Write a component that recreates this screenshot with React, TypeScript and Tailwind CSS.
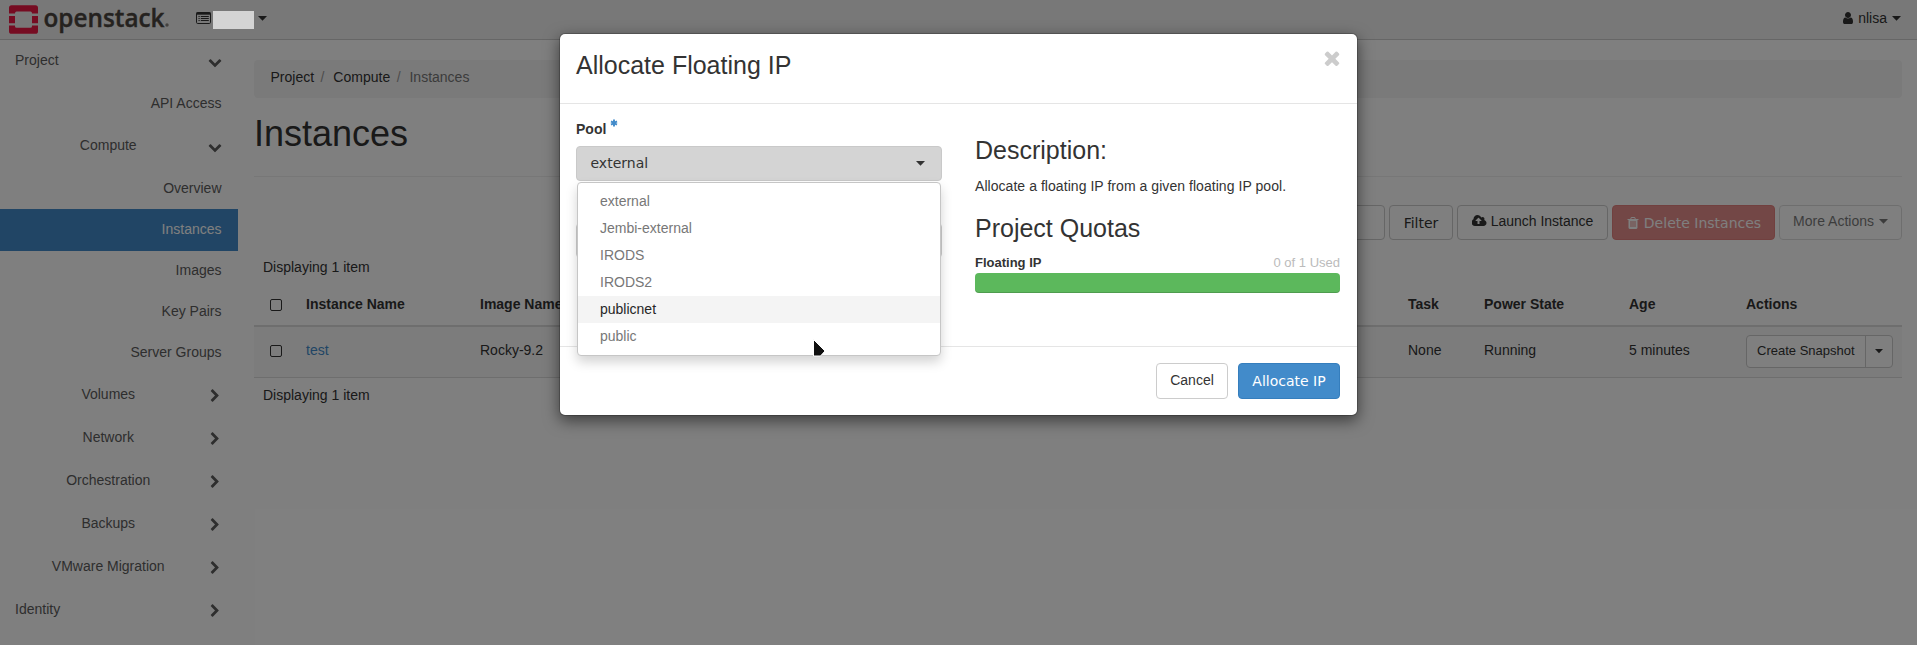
import type { ReactNode } from "react";

const paths = {
  down: "M1683 808l-742 741q-19 19-45 19t-45-19l-742-741q-19-19-19-45.5t19-45.5l166-165q19-19 45-19t45 19l531 531 531-531q19-19 45-19t45 19l166 165q19 19 19 45.5t-19 45.5z",
  right:
    "M1363 877l-742 742q-19 19-45 19t-45-19l-166-166q-19-19-19-45t19-45l531-531-531-531q-19-19-19-45t19-45l166-166q19-19 45-19t45 19l742 742q19 19 19 45t-19 45z",
  times:
    "M1490 1322q0 40-28 68l-136 136q-28 28-68 28t-68-28l-294-294-294 294q-28 28-68 28t-68-28l-136-136q-28-28-28-68t28-68l294-294-294-294q-28-28-28-68t28-68l136-136q28-28 68-28t68 28l294 294 294-294q28-28 68-28t68 28l136 136q28 28 28 68t-28 68l-294 294 294 294q28 28 28 68z",
  user: "M1536 1399q0 109-62.5 187t-150.5 78h-854q-88 0-150.5-78t-62.5-187q0-85 8.5-160.5t31.5-152 58.5-131 94-89 134.5-34.5q131 128 313 128t313-128q76 0 134.5 34.5t94 89 58.5 131 31.5 152 8.5 160.5zm-256-887q0 159-112.5 271.5t-271.5 112.5-271.5-112.5-112.5-271.5 112.5-271.5 271.5-112.5 271.5 112.5 112.5 271.5z",
  trash:
    "M704 1376v-704q0-14-9-23t-23-9h-64q-14 0-23 9t-9 23v704q0 14 9 23t23 9h64q14 0 23-9t9-23zm256 0v-704q0-14-9-23t-23-9h-64q-14 0-23 9t-9 23v704q0 14 9 23t23 9h64q14 0 23-9t9-23zm256 0v-704q0-14-9-23t-23-9h-64q-14 0-23 9t-9 23v704q0 14 9 23t23 9h64q14 0 23-9t9-23zm-544-992h448l-48-117q-7-9-17-11h-317q-10 2-17 11zm928 32v64q0 14-9 23t-23 9h-96v948q0 83-47 143.5t-113 60.5h-832q-66 0-113-58.5t-47-141.5v-952h-96q-14 0-23-9t-9-23v-64q0-14 9-23t23-9h309l70-167q15-37 54-63t79-26h320q40 0 79 26t54 63l70 167h309q14 0 23 9t9 23z",
  cloud:
    "M1216 864q0-14-9-23l-352-352q-9-9-23-9t-23 9l-351 351q-10 12-10 24 0 14 9 23t23 9h224v352q0 13 9.5 22.5t22.5 9.5h192q13 0 22.5-9.5t9.5-22.5v-352h224q13 0 22.5-9.5t9.5-22.5zm640 288q0 159-112.5 271.5t-271.5 112.5h-1088q-185 0-316.5-131.5t-131.5-316.5q0-130 70-240t188-165q-2-30-2-43 0-212 150-362t362-150q156 0 285.5 87t188.5 231q71-62 166-62 106 0 181 75t75 181q0 76-41 138 130 31 213.5 135.5t83.5 238.5z",
};

function Icon({ name, className, box = "0 0 1792 1792" }: { name: keyof typeof paths; className: string; box?: string }) {
  return (
    <svg viewBox={box} className={`shrink-0 ${className}`} fill="currentColor">
      <path d={paths[name]} />
    </svg>
  );
}

function Caret({ className = "", size = "h-[5px] w-[9px]" }: { className?: string; size?: string }) {
  return (
    <svg viewBox="0 0 9 5" className={`shrink-0 ${size} ${className}`} fill="currentColor">
      <path d="M0 0h9L4.500 4.800z" />
    </svg>
  );
}

function ListIcon() {
  return (
    <svg viewBox="0 0 15 12" className="mt-[11.500px] h-3 w-[15px]" fill="none" stroke="#333">
      <rect x=".5" y=".5" width="14" height="11" rx="1.2" />
      <path d="M.5 1.500h14" strokeWidth="2.400" />
      <path d="M2.500 4.500h1.200M2.500 6.500h1.200M2.500 8.500h1.200M4.800 4.500h8M4.800 6.500h8M4.800 8.500h8" />
    </svg>
  );
}

function Logo() {
  return (
    <svg viewBox="0 0 160 40" className="ml-2 h-10 w-40 shrink-0 overflow-visible">
      <g fill="#ed1944">
        <path d="M1 13.6V7.8A2.6 2.6 0 0 1 3.6 5.2h23.8A2.6 2.6 0 0 1 30 7.8v5.8h-6v-.4a1.6 1.6 0 0 0-1.6-1.6H8.6A1.6 1.6 0 0 0 7 13.2v.4z" />
        <path d="M1 15.9h6v7.4H1zM24 15.9h6v7.4h-6z" />
        <path d="M1 25.6h6v.6a1.6 1.6 0 0 0 1.6 1.6h13.800a1.600 1.600 0 0 0 1.600-1.600v-.6h6v5.600a2.600 2.600 0 0 1-2.600 2.600H3.600A2.600 2.600 0 0 1 1 31.200z" />
      </g>
      <text
        x="35.5"
        y="26.700"
        fontFamily="'Open Sans'"
        fontWeight="600"
        fontSize="25.500"
        textLength="121"
        lengthAdjust="spacingAndGlyphs"
        fill="#4a443f"
        stroke="#4a443f"
        strokeWidth=".4"
      >
        openstack
      </text>
      <circle cx="159" cy="25" r="1.700" fill="#8a8580" />
    </svg>
  );
}

type Row = { label: string; kind: "root" | "group" | "leaf"; size: string; open?: boolean; active?: boolean };

const rows: Row[] = [
  { label: "Project", kind: "root", size: "h-[43px] pt-2.5", open: true },
  { label: "API Access", kind: "leaf", size: "h-[42px] pt-2.5" },
  { label: "Compute", kind: "group", size: "h-[43px] pt-2.5", open: true },
  { label: "Overview", kind: "leaf", size: "h-[41px] pt-2.5" },
  { label: "Instances", kind: "leaf", size: "h-[42px] pt-2.5", active: true },
  { label: "Images", kind: "leaf", size: "h-[41px] pt-[9px]" },
  { label: "Key Pairs", kind: "leaf", size: "h-[41px] pt-[9px]" },
  { label: "Server Groups", kind: "leaf", size: "h-[41px] pt-[9px]" },
  { label: "Volumes", kind: "group", size: "h-[43px] pt-2.5" },
  { label: "Network", kind: "group", size: "h-[43px] pt-2.5" },
  { label: "Orchestration", kind: "group", size: "h-[43px] pt-2.5" },
  { label: "Backups", kind: "group", size: "h-[43px] pt-2.5" },
  { label: "VMware Migration", kind: "group", size: "h-[43px] pt-2.5" },
  { label: "Identity", kind: "root", size: "h-[43px] pt-2.5" },
];

const align = { root: "text-left", group: "text-center", leaf: "text-right" };

function Sidebar() {
  return (
    <nav className="w-[238px] shrink-0">
      {rows.map((r) => (
        <div
          key={r.label}
          className={`flex pr-[16.500px] pl-[15px] ${r.size} ${r.active ? "bg-[#428bca] text-white" : "text-[#5c5c5c]"}`}
        >
          <span className={`flex-1 ${align[r.kind]}`}>{r.label}</span>
          {r.kind !== "leaf" && (
            <span className="flex w-5 justify-end pt-[5px]">
              <Icon name={r.open ? "down" : "right"} className="size-3.5" />
            </span>
          )}
        </div>
      ))}
    </nav>
  );
}

function Button({ children, className }: { children: ReactNode; className: string }) {
  return (
    <button className={`flex h-[35px] shrink-0 justify-center rounded border leading-5 ${className}`}>{children}</button>
  );
}

function Checkbox() {
  return <span className="block size-[11.5px] rounded-[2px] border border-[#333]" />;
}

const columns = "grid grid-cols-[44px_174px_928px_76px_145px_117px_164px]";

function Main() {
  return (
    <main className="flex flex-1 flex-col pt-5 pr-[15px] pl-4 text-[#333]">
      <div className="flex h-[38px] rounded bg-[#f5f5f5] pt-[7px] pl-[16.500px]">
        <span>Project</span>
        <span className="pr-[5px] pl-[6.500px] text-[#999]">/&nbsp;</span>
        <span>Compute</span>
        <span className="pr-[5px] pl-[6.500px] text-[#999]">/&nbsp;</span>
        <span className="text-[#777]">Instances</span>
      </div>
      <h1 className="h-[79px] border-b border-[#eee] pt-4 text-[36px] leading-10">Instances</h1>
      <div className="mt-7 flex justify-end gap-1">
        <div className="h-[35px] w-[220px] rounded border border-[#ccc]" />
        <Button className="w-16 border-[#ccc] pt-[7px] font-['DejaVu_Sans']">Filter</Button>
        <Button className="w-[151px] gap-1 border-[#ccc] pt-[5px]">
          <Icon name="cloud" box="0 0 1920 1792" className="mt-[3px] h-3.5 w-[15px]" />
          Launch Instance
        </Button>
        <Button className="w-[163px] gap-1 border-[#d43f3a] bg-[#d9534f] pt-[7px] font-['DejaVu_Sans'] text-white opacity-65">
          <Icon name="trash" className="mt-[3px] size-3.5" />
          Delete Instances
        </Button>
        <Button className="w-[123px] gap-[5px] border-[#ccc] pt-[5px] opacity-65">
          More Actions
          <Caret className="mt-2" />
        </Button>
      </div>
      <div className="mt-[17px] pl-[9px]">Displaying 1 item</div>
      <div className={`${columns} mt-[17px] h-[33px] border-b-2 border-[#ddd] font-bold`}>
        <span className="pt-[5px] pl-4">
          <Checkbox />
        </span>
        <span className="pl-2">Instance Name</span>
        <span className="pl-2">Image Name</span>
        <span className="pl-2">Task</span>
        <span className="pl-2">Power State</span>
        <span className="pl-2">Age</span>
        <span className="pl-2">Actions</span>
      </div>
      <div className={`${columns} h-[51px] border-b border-[#ddd] bg-[#f9f9f9] pt-[13px]`}>
        <span className="pt-[5px] pl-4">
          <Checkbox />
        </span>
        <span className="pl-2 text-[#428bca]">test</span>
        <span className="pl-2">Rocky-9.2</span>
        <span className="pl-2">None</span>
        <span className="pl-2">Running</span>
        <span className="pl-2">5 minutes</span>
        <span className="-mt-[5px] ml-2 flex h-[33px] w-[147px] rounded border border-[#ccc] bg-white text-[13px]">
          <span className="flex-1 pt-[5px] pl-2.5 whitespace-nowrap">Create Snapshot</span>
          <span className="flex w-[27px] items-center justify-center border-l border-[#ccc]">
            <Caret size="h-[4.500px] w-2" />
          </span>
        </span>
      </div>
      <div className="mt-[7px] pl-[9px]">Displaying 1 item</div>
    </main>
  );
}

const pools = ["external", "Jembi-external", "IRODS", "IRODS2", "publicnet", "public"];

function PoolMenu() {
  return (
    <ul className="absolute top-[35px] left-0 z-10 w-[364px] rounded border border-[#c6c6c6] bg-white py-[5px] font-['Liberation_Sans'] shadow-[0_6px_12px_rgba(0,0,0,0.175)]">
      {pools.map((p) => (
        <li
          key={p}
          className={`h-[27px] pt-[3px] pl-[22px] ${p === "publicnet" ? "bg-[#f4f4f4] text-[#262626]" : "text-[#777]"}`}
        >
          {p}
        </li>
      ))}
    </ul>
  );
}

function Modal() {
  return (
    <div className="absolute top-[33px] left-[559px] z-30 flex h-[383px] w-[799px] flex-col rounded-md border border-black/20 bg-white bg-clip-padding text-[#333] shadow-[0_5px_15px_rgba(0,0,0,0.5)]">
      <header className="flex h-[70px] shrink-0 justify-between border-b border-[#e5e5e5] pt-4 pr-[14px] pl-4">
        <h3 className="text-[25px] leading-[30px]">Allocate Floating IP</h3>
        <Icon name="times" className="-mt-[3px] size-[22px] text-[#ccc]" />
      </header>
      <div className="flex h-[242px] shrink-0 gap-[33px] pl-4">
        <div className="w-[366px] pt-[15px]">
          <label className="flex gap-[4px] font-bold">
            Pool
            <svg viewBox="0 0 8 8" className="size-2" stroke="#428bca" strokeWidth="1.9">
              <path d="M4 .6v6.8M1 2.3l6 3.4M7 2.3L1 5.7" />
            </svg>
          </label>
          <div className="relative mt-[7px] flex h-[35px] justify-between rounded border border-[#c9c9c9] bg-[#d4d4d4] pt-[6px] pr-4 pl-[13.500px] font-['DejaVu_Sans']">
            external
            <Caret className="mt-2" />
            <PoolMenu />
          </div>
          <div className="mt-[42px] h-[35px] rounded border border-[#ccc]" />
        </div>
        <div className="w-[365px] pt-[31px]">
          <h3 className="text-[25px] leading-[30px]">Description:</h3>
          <p className="mt-[11px] tracking-[0.050px]">Allocate a floating IP from a given floating IP pool.</p>
          <h3 className="mt-[17px] text-[25px] leading-[30px]">Project Quotas</h3>
          <div className="mt-2.5 flex justify-between text-[13px] leading-5">
            <strong>Floating IP</strong>
            <span className="text-[#bbb]">0 of 1 Used</span>
          </div>
          <div className="h-5 rounded bg-[#5cb85c] shadow-[inset_0_-1px_0_rgba(0,0,0,0.15)]" />
        </div>
      </div>
      <footer className="flex flex-1 justify-end gap-2.5 border-t border-[#e5e5e5] pt-4 pr-[17px]">
        <button className="h-9 w-[72px] rounded border border-[#ccc] pb-[2px]">Cancel</button>
        <button className="h-9 w-[102px] rounded border border-[#357ebd] bg-[#428bca] font-['DejaVu_Sans'] whitespace-nowrap text-white">
          Allocate IP
        </button>
      </footer>
    </div>
  );
}

export default function App() {
  return (
    <div className="relative flex h-[645px] flex-col overflow-hidden bg-white font-['Liberation_Sans',Arial,sans-serif] text-sm leading-5">
      <header className="flex h-10 shrink-0 border-b border-[#ccc] bg-[#f0f0f0] text-[#333]">
        <Logo />
        <div className="ml-7 flex">
          <ListIcon />
          <span className="relative z-20 mt-[11px] ml-[2px] h-[18px] w-[41px] bg-[#d4d4d4]" />
          <Caret className="mt-4 ml-1" />
        </div>
        <div className="ml-auto flex pt-2 pr-4">
          <Icon name="user" className="mt-[3px] size-3.5" />
          <span className="ml-[3px]">nlisa</span>
          <Caret className="mt-2 ml-[5px]" />
        </div>
      </header>
      <div className="flex flex-1">
        <Sidebar />
        <Main />
      </div>
      <div className="absolute inset-0 z-10 bg-black/50" />
      <Modal />
      <svg viewBox="0 0 14 20" className="absolute top-[338px] left-[812px] z-40 h-5 w-3.5">
        <path d="M1.500 1.500L13 13l-4.500 5h-7z" fill="#111" stroke="#fff" strokeWidth="1" />
      </svg>
    </div>
  );
}
